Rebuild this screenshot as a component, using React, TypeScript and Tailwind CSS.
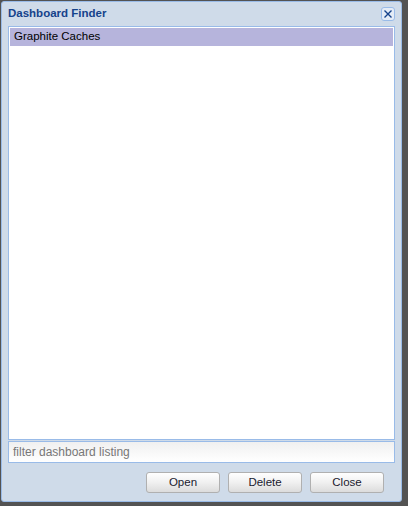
export default function App() {
  const font = { fontFamily: '"Liberation Sans", Arial, sans-serif' }
  return (
    <div
      className="w-[408px] h-[506px] bg-[#535353] relative overflow-hidden"
      style={font}
    >
      {/* Dialog window */}
      <div className="absolute left-[1px] top-[1px] w-[401px] h-[501px] bg-[#cfdbe9] border border-[#99bbe8] rounded-[3px] flex flex-col">
        {/* Header */}
        <div className="h-[24px] flex items-center justify-between pl-[6px] pr-[6px]">
          <span className="text-[11.5px] font-bold text-[#15428b]">Dashboard Finder</span>
          <button className="w-[14px] h-[14px] rounded-[3px] border border-[#99bbe8] bg-[#e4ecf7] flex items-center justify-center">
            <svg width="10" height="10" viewBox="0 0 10 10">
              <path d="M1.5 1.5 L8.5 8.5 M8.5 1.5 L1.5 8.5" stroke="#15428b" strokeWidth="1.4" />
            </svg>
          </button>
        </div>

        {/* Body */}
        <div className="flex flex-col px-[6px]">
          <div className="h-[414px] bg-white border border-[#99bbe8] pt-[1px] px-[1px]">
            <div className="h-[18px] bg-[#b6b4dc] flex items-center pl-[4px] text-[11.5px] text-black">
              Graphite Caches
            </div>
          </div>
          <div className="mt-[1px] h-[22px] border border-[#99bbe8] flex items-center pl-[4px] bg-gradient-to-b from-[#f0f0f0] to-white">
            <span className="text-[12px] text-[#777]">filter dashboard listing</span>
          </div>
        </div>

        {/* Buttons */}
        <div className="flex justify-end gap-[8px] pr-[17px] mt-[9px]">
          {['Open', 'Delete', 'Close'].map((label) => (
            <button
              key={label}
              className="w-[74px] h-[21px] rounded-[3px] border border-[#b0b0b0] bg-gradient-to-b from-white via-[#f0f0f0] to-[#dcdcdc] text-[11.5px] text-[#1a1a2e] flex items-center justify-center"
            >
              {label}
            </button>
          ))}
        </div>
      </div>
    </div>
  )
}
